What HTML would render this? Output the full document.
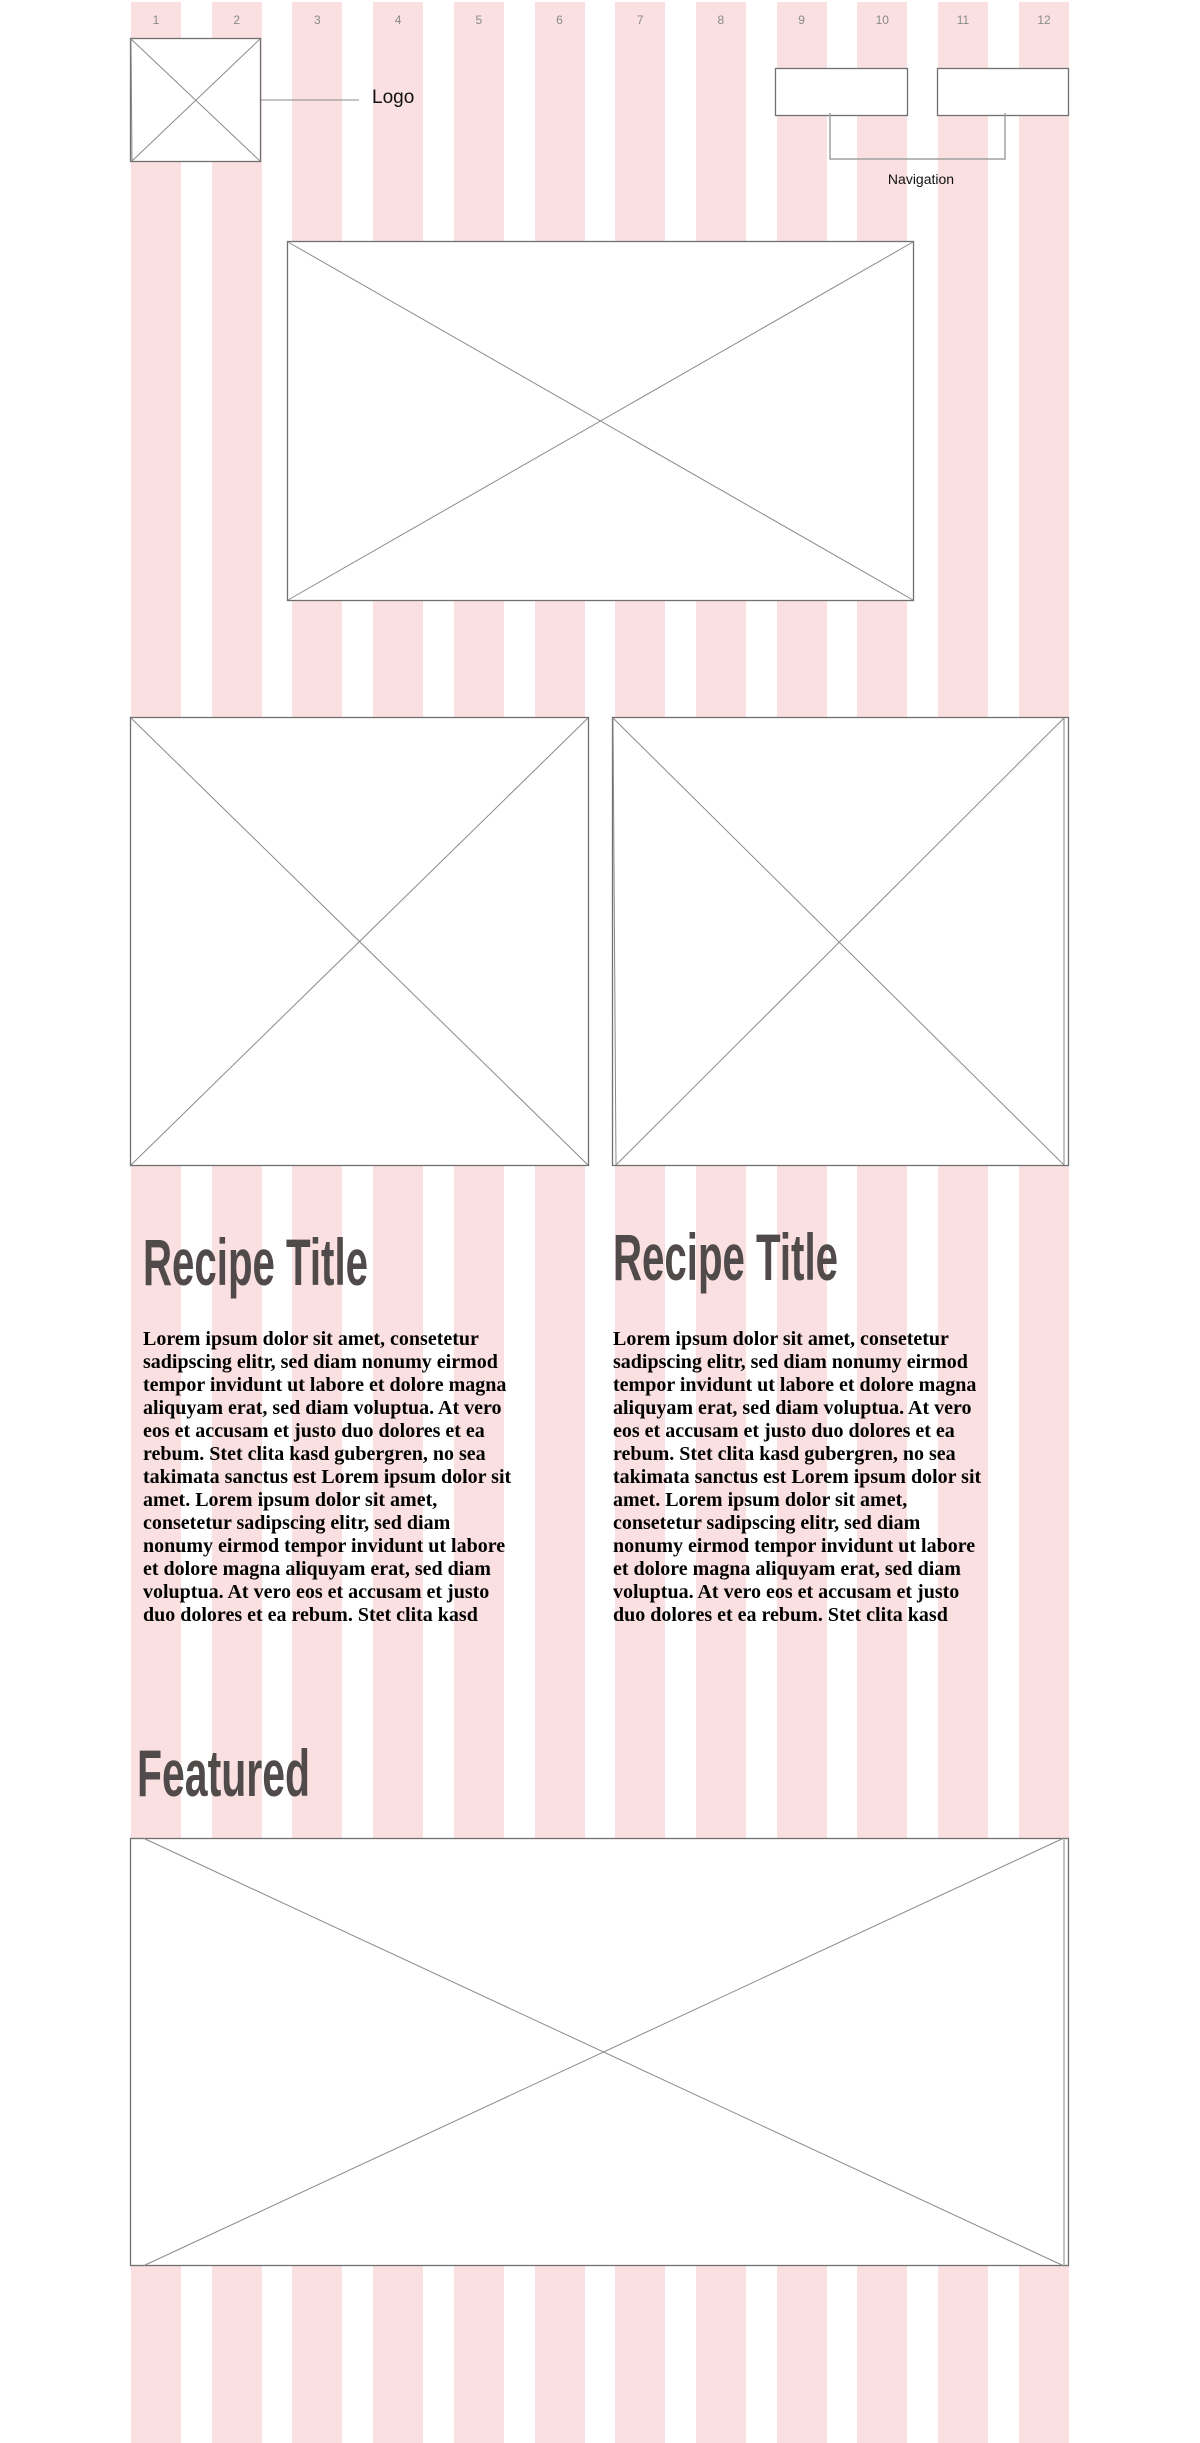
<!DOCTYPE html>
<html><head><meta charset="utf-8"><style>
html,body{margin:0;padding:0;background:#fff;}
body{width:1200px;height:2443px;position:relative;overflow:hidden;font-family:"Liberation Sans",sans-serif;}
.col{position:absolute;top:2px;bottom:0;width:50px;background:#fae0e0;}
.num{position:absolute;top:13px;width:50px;text-align:center;font-size:12px;color:#8a8a8a;}
svg{position:absolute;left:0;top:0;}
p{position:absolute;margin:0;width:382px;font-family:"Liberation Serif",serif;font-weight:bold;font-size:20px;line-height:23px;color:#000;}
</style></head><body>
<div class="col" style="left:131px"></div><div class="col" style="left:211.7px"></div><div class="col" style="left:292.4px"></div><div class="col" style="left:373.1px"></div><div class="col" style="left:453.8px"></div><div class="col" style="left:534.5px"></div><div class="col" style="left:615.2px"></div><div class="col" style="left:695.9px"></div><div class="col" style="left:776.6px"></div><div class="col" style="left:857.3px"></div><div class="col" style="left:938px"></div><div class="col" style="left:1019px"></div>
<div class="num" style="left:131px">1</div><div class="num" style="left:211.7px">2</div><div class="num" style="left:292.4px">3</div><div class="num" style="left:373.1px">4</div><div class="num" style="left:453.8px">5</div><div class="num" style="left:534.5px">6</div><div class="num" style="left:615.2px">7</div><div class="num" style="left:695.9px">8</div><div class="num" style="left:776.6px">9</div><div class="num" style="left:857.3px">10</div><div class="num" style="left:938px">11</div><div class="num" style="left:1019px">12</div>
<svg width="1200" height="2443" viewBox="0 0 1200 2443">
<g fill="#fff" stroke="#707070" stroke-width="1.3">
<rect x="130.5" y="38.5" width="130" height="123"/>
<rect x="775.5" y="68.5" width="132" height="47"/>
<rect x="937.5" y="68.5" width="131" height="47"/>
<rect x="287.5" y="241.5" width="626" height="359"/>
<rect x="130.5" y="717.5" width="458" height="448"/>
<rect x="612.5" y="717.5" width="456" height="448"/>
<rect x="130.5" y="1838.5" width="938" height="427"/>
</g>
<g stroke="#8a8a8a" stroke-width="1" fill="none">
<line x1="131" y1="39" x2="260" y2="161"/><line x1="260" y1="39" x2="132" y2="161"/><line x1="131" y1="39" x2="132" y2="161"/>
<line x1="261" y1="100" x2="359" y2="100"/>
<polyline points="830,113 830,159 1005,159 1005,113" stroke="#a0a0a0" stroke-width="1.5"/>
<line x1="288" y1="242" x2="913" y2="600"/><line x1="913" y1="242" x2="288" y2="600"/>
<line x1="131" y1="718" x2="588" y2="1165"/><line x1="588" y1="718" x2="131" y2="1165"/>
<line x1="613" y1="718" x2="1064" y2="1165"/><line x1="1064" y1="718" x2="616" y2="1165"/><line x1="1064" y1="718" x2="1064" y2="1165"/><line x1="613" y1="718" x2="616" y2="1165"/>
<line x1="143" y1="1838" x2="1064" y2="2266"/><line x1="1064" y1="1838" x2="143" y2="2266"/><line x1="1064" y1="1838" x2="1064" y2="2266"/>
</g>
<text x="372" y="103" font-family="Liberation Sans, sans-serif" font-size="19" fill="#111">Logo</text>
<text x="921" y="184" font-family="Liberation Sans, sans-serif" font-size="14" fill="#111" text-anchor="middle">Navigation</text>
<g font-family="Liberation Sans Narrow, Liberation Sans, sans-serif" font-weight="bold" font-size="66" fill="#504a4a">
<text x="143" y="1285" textLength="225" lengthAdjust="spacingAndGlyphs">Recipe Title</text>
<text x="613" y="1280" textLength="225" lengthAdjust="spacingAndGlyphs">Recipe Title</text>
<text x="137" y="1796" textLength="173" lengthAdjust="spacingAndGlyphs">Featured</text>
</g>
</svg>
<p style="left:143px;top:1328px">Lorem ipsum dolor sit amet, consetetur sadipscing elitr, sed diam nonumy eirmod tempor invidunt ut labore et dolore magna aliquyam erat, sed diam voluptua. At vero eos et accusam et justo duo dolores et ea rebum. Stet clita kasd gubergren, no sea takimata sanctus est Lorem ipsum dolor sit amet. Lorem ipsum dolor sit amet, consetetur sadipscing elitr, sed diam nonumy eirmod tempor invidunt ut labore et dolore magna aliquyam erat, sed diam voluptua. At vero eos et accusam et justo duo dolores et ea rebum. Stet clita kasd</p>
<p style="left:613px;top:1328px">Lorem ipsum dolor sit amet, consetetur sadipscing elitr, sed diam nonumy eirmod tempor invidunt ut labore et dolore magna aliquyam erat, sed diam voluptua. At vero eos et accusam et justo duo dolores et ea rebum. Stet clita kasd gubergren, no sea takimata sanctus est Lorem ipsum dolor sit amet. Lorem ipsum dolor sit amet, consetetur sadipscing elitr, sed diam nonumy eirmod tempor invidunt ut labore et dolore magna aliquyam erat, sed diam voluptua. At vero eos et accusam et justo duo dolores et ea rebum. Stet clita kasd</p>
</body></html>
